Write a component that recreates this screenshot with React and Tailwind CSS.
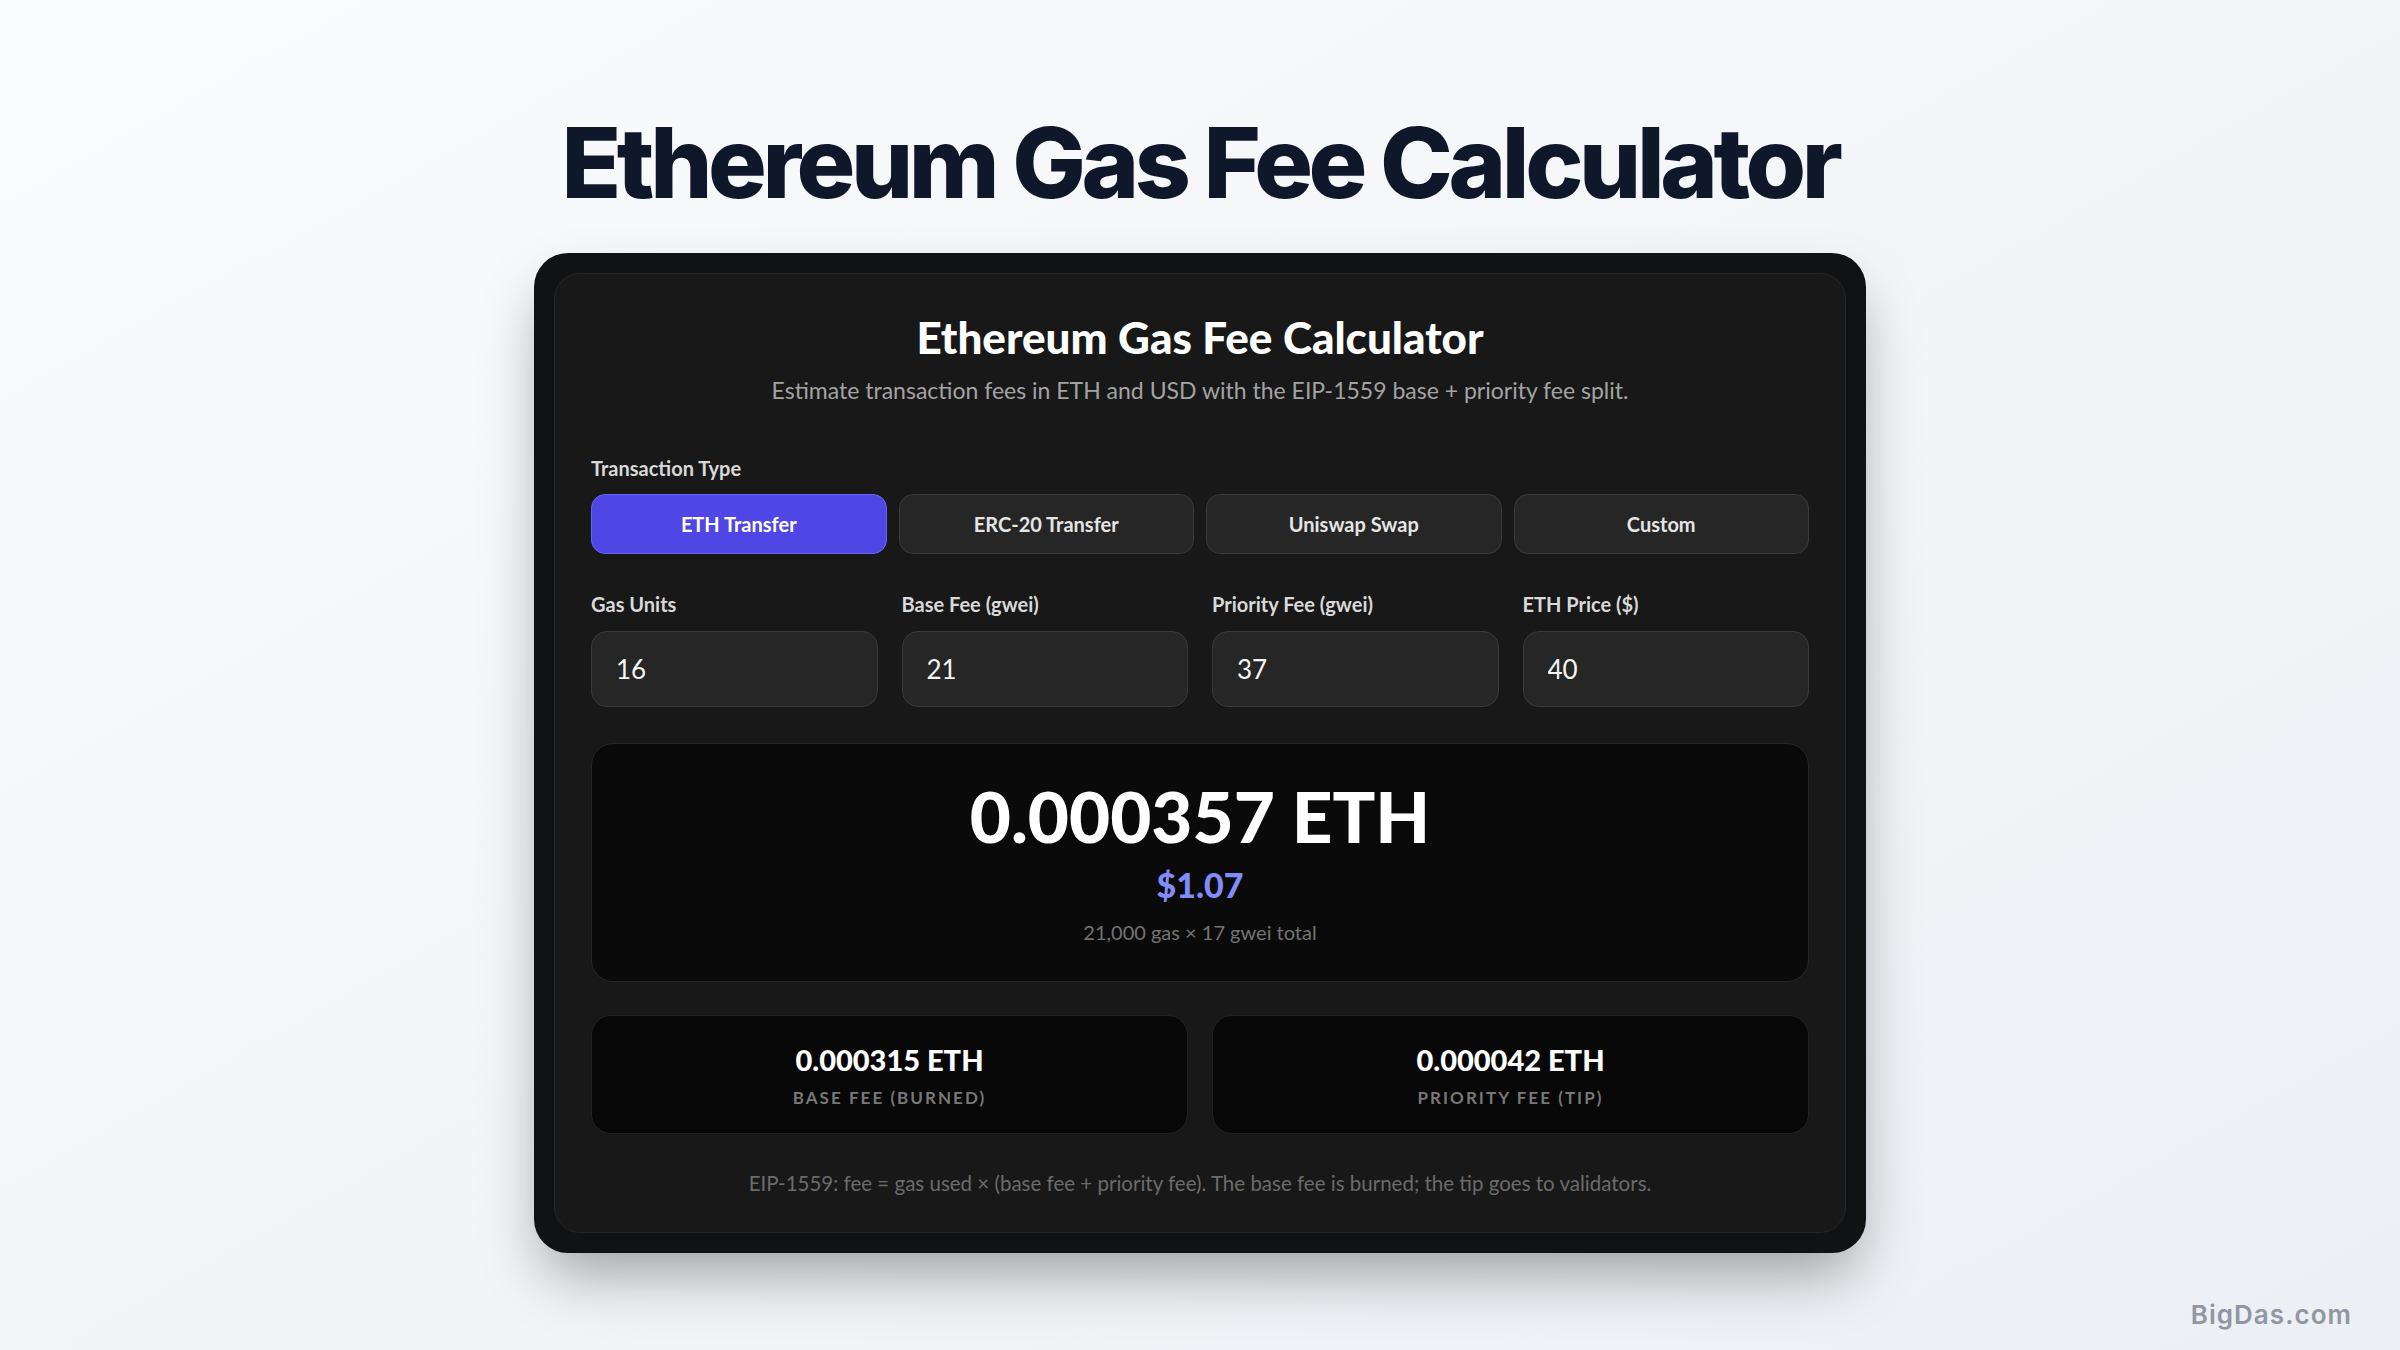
import React, { useState } from "react";

const tabs = ["ETH Transfer", "ERC-20 Transfer", "Uniswap Swap", "Custom"];

const fields = [
  { label: "Gas Units", value: "16" },
  { label: "Base Fee (gwei)", value: "21" },
  { label: "Priority Fee (gwei)", value: "37" },
  { label: "ETH Price ($)", value: "40" },
];

export default function App() {
  const [active, setActive] = useState("ETH Transfer");

  return (
    <div className="relative min-h-screen w-full bg-gradient-to-br from-[#fafbfc] to-[#eceff4] flex flex-col items-center pt-[114px] pb-[60px]">
      <h1 className="font-['Inter',sans-serif] text-[98px] leading-none font-extrabold tracking-[-0.045em] text-[#0f172a] mb-[41px]">
        Ethereum Gas Fee Calculator
      </h1>

      {/* Outer frame */}
      <div className="w-[1332px] p-[20px] rounded-[34px] bg-[#111213] shadow-[0_30px_60px_-10px_rgba(0,0,0,0.35)]">
        <div className="rounded-[26px] border border-[#262626] bg-[#181818] px-[36px] pt-[37px] pb-[37px] font-['Lato','Noto_Sans',sans-serif]">
          <h2 className="text-center text-[44px] leading-[1.2] font-black text-white">
            Ethereum Gas Fee Calculator
          </h2>
          <p className="mt-[13px] text-center text-[23px] leading-[1.2] text-[#a3a3a3]">
            Estimate transaction fees in ETH and USD with the EIP-1559 base + priority fee split.
          </p>

          {/* Transaction type */}
          <div className="mt-[52px] text-[20px] leading-[1.2] font-bold text-[#d9d9d9]">
            Transaction Type
          </div>
          <div className="mt-[14px] grid grid-cols-4 gap-[12px]">
            {tabs.map((t) => (
              <button
                key={t}
                onClick={() => setActive(t)}
                className={`h-[60px] rounded-[14px] border text-[20px] font-bold ${
                  active === t
                    ? "bg-[#4f46e5] border-[#6366f1] text-white"
                    : "bg-[#262626] border-[#3a3a3a] text-[#e5e5e5]"
                }`}
              >
                {t}
              </button>
            ))}
          </div>

          {/* Inputs */}
          <div className="mt-[38px] grid grid-cols-4 gap-[24px]">
            {fields.map((f) => (
              <div key={f.label} className="flex flex-col">
                <label className="text-[20px] leading-[1.2] font-bold text-[#d9d9d9]">
                  {f.label}
                </label>
                <input
                  type="text"
                  defaultValue={f.value}
                  className="mt-[15px] h-[76px] w-full rounded-[16px] border border-[#3a3a3a] bg-[#262626] px-[24px] text-[26px] text-[#f5f5f5] outline-none"
                />
              </div>
            ))}
          </div>

          {/* Total */}
          <div className="mt-[36px] rounded-[22px] border border-[#262626] bg-[#0a0a0a] pt-[36px] pb-[37px] text-center">
            <div className="text-[71px] leading-none font-black text-white">0.000357 ETH</div>
            <div className="mt-[17px] text-[34px] leading-none font-black text-[#818cf8]">$1.07</div>
            <div className="mt-[18px] text-[20px] leading-[1.2] text-[#737373]">
              21,000 gas × 17 gwei total
            </div>
          </div>

          {/* Split */}
          <div className="mt-[33px] grid grid-cols-2 gap-[24px]">
            {[
              { v: "0.000315 ETH", l: "Base Fee (Burned)" },
              { v: "0.000042 ETH", l: "Priority Fee (Tip)" },
            ].map((s) => (
              <div
                key={s.l}
                className="rounded-[20px] border border-[#222222] bg-[#070707] pt-[27px] pb-[24px] text-center"
              >
                <div className="text-[29px] leading-[1.2] font-black text-white">{s.v}</div>
                <div className="mt-[10px] text-[17px] leading-[1.2] font-bold uppercase tracking-[0.12em] text-[#777777]">
                  {s.l}
                </div>
              </div>
            ))}
          </div>

          <p className="mt-[37px] text-center text-[20.5px] leading-[1.2] text-[#6b6b6b]">
            EIP-1559: fee = gas used × (base fee + priority fee). The base fee is burned; the tip goes to validators.
          </p>
        </div>
      </div>

      <div className="absolute right-[48px] bottom-[22px] font-['Inter',sans-serif] text-[26px] leading-none font-semibold tracking-[0.04em] text-[#9096a2]">
        BigDas.com
      </div>
    </div>
  );
}
